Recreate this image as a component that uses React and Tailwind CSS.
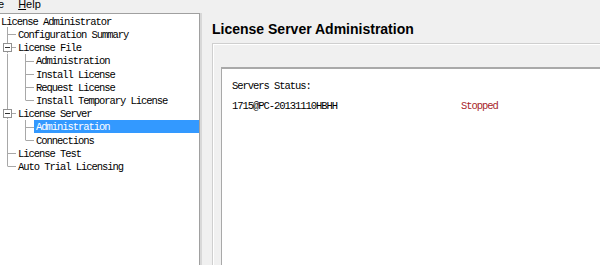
import React from "react";

const MONO = { fontFamily: '"Liberation Mono", monospace' };

const rows = [
  { label: "License Administrator", level: 0 },
  { label: "Configuration Summary", level: 1, conn: "tee" },
  { label: "License File", level: 1, conn: "box" },
  { label: "Administration", level: 2, conn: "tee" },
  { label: "Install License", level: 2, conn: "tee" },
  { label: "Request License", level: 2, conn: "tee" },
  { label: "Install Temporary License", level: 2, conn: "last" },
  { label: "License Server", level: 1, conn: "box" },
  { label: "Administration", level: 2, conn: "tee", selected: true },
  { label: "Connections", level: 2, conn: "last" },
  { label: "License Test", level: 1, conn: "tee" },
  { label: "Auto Trial Licensing", level: 1, conn: "last" },
];

const LINE = "#a8a8a8";
const H = 13.2;

function Guide() {
  return (
    <svg width="18" height={H} className="shrink-0 block">
      <line x1="7.5" y1="0" x2="7.5" y2={H} stroke={LINE} strokeWidth="1" />
    </svg>
  );
}

function Conn({ type }) {
  const mid = 7.5;
  return (
    <svg width="16" height={H} className="shrink-0 block">
      {type === "last" ? (
        <line x1="7.5" y1="0" x2="7.5" y2={mid} stroke={LINE} strokeWidth="1" />
      ) : (
        <line x1="7.5" y1="0" x2="7.5" y2={H} stroke={LINE} strokeWidth="1" />
      )}
      {type === "box" ? (
        <>
          <rect x="3.5" y="3.5" width="8" height="8" fill="#fff" stroke="#919191" strokeWidth="1" />
          <line x1="5" y1={mid} x2="10" y2={mid} stroke="#333" strokeWidth="1" />
          <line x1="12" y1={mid} x2="16" y2={mid} stroke={LINE} strokeWidth="1" />
        </>
      ) : (
        <line x1="8" y1={mid} x2="16" y2={mid} stroke={LINE} strokeWidth="1" />
      )}
    </svg>
  );
}

function TreeRow({ row }) {
  return (
    <div className="flex items-stretch" style={{ height: H }}>
      {row.level === 2 && <Guide />}
      {row.level > 0 && <Conn type={row.conn} />}
      <div
        className={
          "flex-1 flex items-center pt-[3px] whitespace-nowrap text-[10.5px] tracking-[-1.05px] leading-none " +
          (row.level === 0 ? "pl-[1px] " : "pl-[2px] ") +
          (row.selected ? "bg-[#3399ff] text-white" : "text-black")
        }
        style={MONO}
      >
        {row.label}
      </div>
    </div>
  );
}

export default function App() {
  return (
    <div className="w-[600px] h-[265px] overflow-hidden bg-[#f0f0f0] flex flex-col">
      {/* menu bar */}
      <div
        className="h-[13px] flex items-start text-[11px] leading-[11px] text-black gap-[14px]"
        style={{ fontFamily: '"Liberation Sans", sans-serif' }}
      >
        <span className="-mt-[1px] -ml-[2px]">e</span>
        <span className="-mt-[1px]">
          <span className="underline underline-offset-[1px]">H</span>elp
        </span>
      </div>

      <div className="flex-1 flex min-h-0">
        {/* tree */}
        <div className="w-[200px] shrink-0 bg-white border-t border-r border-[#a0a0a0] flex flex-col">
          <div>
            {rows.map((r, i) => (
              <TreeRow key={i} row={r} />
            ))}
          </div>
        </div>
        <div className="w-[2px] bg-[#d8d8d8] shrink-0" />

        {/* right panel */}
        <div className="flex-1 flex flex-col pl-[10px] min-w-0">
          <div
            className="h-[30px] shrink-0 pt-[8px] text-[14px] leading-[16px] font-bold text-black whitespace-nowrap"
            style={{ fontFamily: '"Liberation Sans", Arial, sans-serif' }}
          >
            License Server Administration
          </div>
          <div className="flex-1 flex flex-col border-t border-l border-[#cfcfcf] shadow-[inset_1px_1px_0_#ffffff] pl-[8px] pt-[23px]">
            <div className="flex-1 bg-white border-l border-t-2 border-[#a9a9a9] pl-[10px] pt-[6px]">
              <div
                className="h-[20px] flex items-center pt-[2px] text-[10.5px] tracking-[-1.05px] leading-none text-black whitespace-nowrap"
                style={MONO}
              >
                Servers Status:
              </div>
              <div
                className="h-[20px] flex items-center pt-[2px] text-[10.5px] tracking-[-1.05px] leading-none whitespace-nowrap"
                style={MONO}
              >
                <span className="w-[229px] shrink-0 text-black">1715@PC-20131110HBHH</span>
                <span className="text-[#a8262b]">Stopped</span>
              </div>
            </div>
          </div>
        </div>
      </div>
    </div>
  );
}
